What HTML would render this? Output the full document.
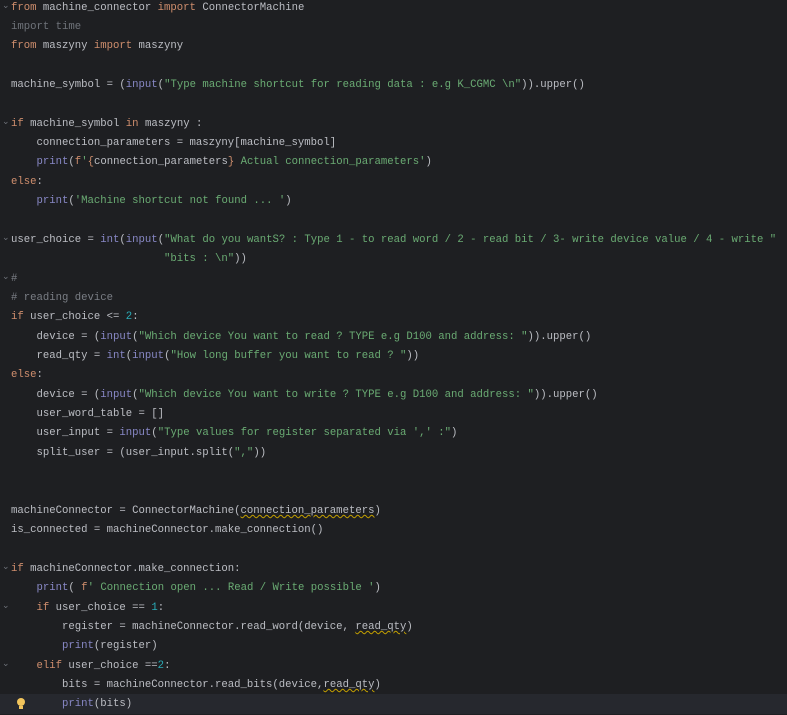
<!DOCTYPE html>
<html><head><meta charset="utf-8"><style>
html,body{margin:0;padding:0;background:#1e1f22;width:787px;height:715px;overflow:hidden}
pre{margin:0;position:absolute;left:11px;top:-1.5px;font-family:"Liberation Mono",monospace;font-size:10.64px;line-height:19.36px;color:#bcbec4;white-space:pre}
.k{color:#cf8e6d}.s{color:#6aab73}.n{color:#2aacb8}.b{color:#8888c6}.c{color:#7a7e85}.u{color:#6f737a}
.w{text-decoration:underline wavy #c4a000;text-decoration-thickness:1px}
.cur{position:absolute;left:0;top:694px;width:787px;height:20px;background:#26282e}
.f{position:absolute;left:2px;color:#6f737a;font-family:"DejaVu Sans",sans-serif;font-size:9px}
.bulb{position:absolute;left:17px;top:698px;width:8px;height:8px;border-radius:50%;background:#f2c55c}
.bulb:after{content:"";position:absolute;left:2px;top:8px;width:4px;height:3px;background:#f2c55c}
</style></head><body>
<div class="cur"></div>
<div class="f" style="top:1px">⌄</div>
<div class="f" style="top:117px">⌄</div>
<div class="f" style="top:233px">⌄</div>
<div class="f" style="top:272px">⌄</div>
<div class="f" style="top:562px">⌄</div>
<div class="f" style="top:601px">⌄</div>
<div class="f" style="top:659px">⌄</div>
<div class="bulb"></div>
<pre><span class="k">from</span> machine_connector <span class="k">import</span> ConnectorMachine
<span class="u">import time</span>
<span class="k">from</span> maszyny <span class="k">import</span> maszyny

machine_symbol = (<span class="b">input</span>(<span class="s">"Type machine shortcut for reading data : e.g K_CGMC \n"</span>)).upper()

<span class="k">if</span> machine_symbol <span class="k">in</span> maszyny :
    connection_parameters = maszyny[machine_symbol]
    <span class="b">print</span>(<span class="k">f</span><span class="s">'</span><span class="k">{</span>connection_parameters<span class="k">}</span><span class="s"> Actual connection_parameters'</span>)
<span class="k">else</span>:
    <span class="b">print</span>(<span class="s">'Machine shortcut not found ... '</span>)

user_choice = <span class="b">int</span>(<span class="b">input</span>(<span class="s">"What do you wantS? : Type 1 - to read word / 2 - read bit / 3- write device value / 4 - write "</span>
                        <span class="s">"bits : \n"</span>))
<span class="c">#</span>
<span class="c"># reading device</span>
<span class="k">if</span> user_choice &lt;= <span class="n">2</span>:
    device = (<span class="b">input</span>(<span class="s">"Which device You want to read ? TYPE e.g D100 and address: "</span>)).upper()
    read_qty = <span class="b">int</span>(<span class="b">input</span>(<span class="s">"How long buffer you want to read ? "</span>))
<span class="k">else</span>:
    device = (<span class="b">input</span>(<span class="s">"Which device You want to write ? TYPE e.g D100 and address: "</span>)).upper()
    user_word_table = []
    user_input = <span class="b">input</span>(<span class="s">"Type values for register separated via ',' :"</span>)
    split_user = (user_input.split(<span class="s">","</span>))


machineConnector = ConnectorMachine(<span class="w">connection_parameters</span>)
is_connected = machineConnector.make_connection()

<span class="k">if</span> machineConnector.make_connection:
    <span class="b">print</span>( <span class="k">f</span><span class="s">' Connection open ... Read / Write possible '</span>)
    <span class="k">if</span> user_choice == <span class="n">1</span>:
        register = machineConnector.read_word(device, <span class="w">read_qty</span>)
        <span class="b">print</span>(register)
    <span class="k">elif</span> user_choice ==<span class="n">2</span>:
        bits = machineConnector.read_bits(device,<span class="w">read_qty</span>)
        <span class="b">print</span>(bits)</pre>
</body></html>
